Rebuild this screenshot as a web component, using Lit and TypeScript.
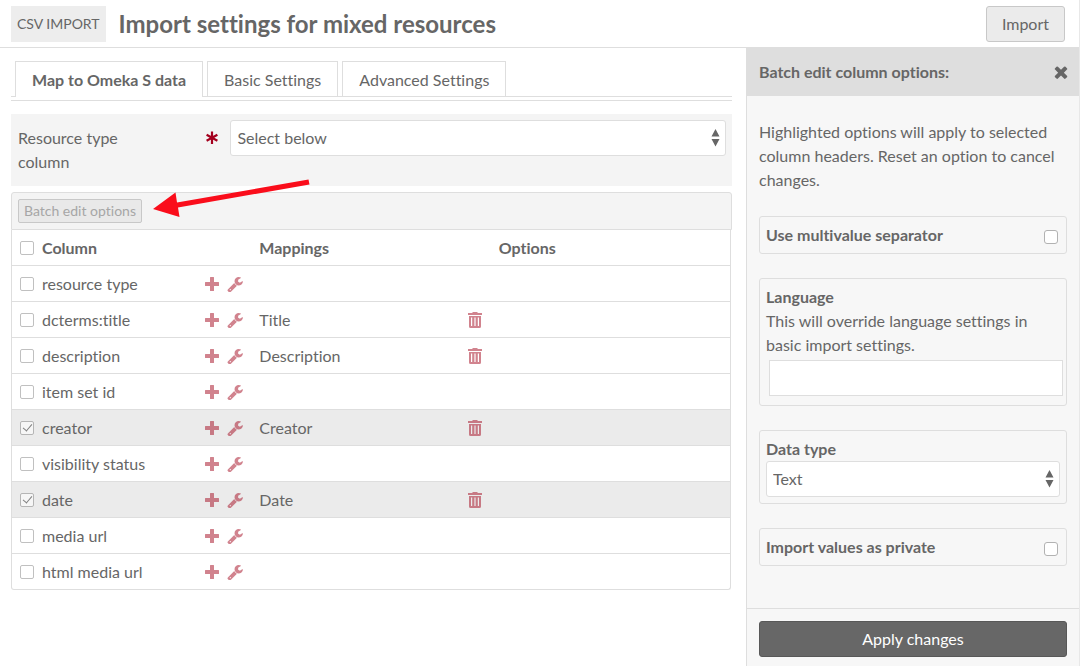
import { LitElement, html, css, svg } from "lit";
import { customElement, property } from "lit/decorators.js";
import { classMap } from "lit/directives/class-map.js";

interface Row {
  name: string;
  mapping?: string;
  selected?: boolean;
}

const ROWS: Row[] = [
  { name: "resource type" },
  { name: "dcterms:title", mapping: "Title" },
  { name: "description", mapping: "Description" },
  { name: "item set id" },
  { name: "creator", mapping: "Creator", selected: true },
  { name: "visibility status" },
  { name: "date", mapping: "Date", selected: true },
  { name: "media url" },
  { name: "html media url" },
];

const ICONS = {
  plus: svg`<path d="M6.500 1h3q.5 0 .5.5V6h4.500q.5 0 .5.5v3q0 .5-.5.5H10v4.500q0 .5-.5.5h-3q-.5 0-.5-.5V10H1.500q-.5 0-.5-.5v-3q0-.5.5-.5H6V1.500q0-.5.5-.5z"/>`,
  wrench: svg`<path transform="translate(-.3 -.2) scale(.0094)" d="M448 1472q0-26-19-45t-45-19-45 19-19 45 19 45 45 19 45-19 19-45zm644-420l-682 682q-37 37-90 37-52 0-91-37l-106-108q-38-36-38-90 0-53 38-91l681-681q39 98 114.500 173.500t173.500 114.500zm634-435q0 39-23 106-47 134-164.500 217.500t-258.500 83.500q-185 0-316.500-131.500t-131.500-316.500 131.500-316.500 316.500-131.500q58 0 121.500 16.500t107.500 46.500q16 11 16 28t-16 28l-293 169v224l193 107q5-3 79-48.500t135.500-81 70.500-35.500q15 0 23.500 10t8.500 25z"/>`,
  trash: svg`<path fill-rule="evenodd" d="M5.500 0h5v1H15v2H1V1h4.500zM2 4h12v10.500q0 1.500-1.500 1.500h-9Q2 16 2 14.500zM4 5.500v8.500h1.200V5.500zM7.400 5.500v8.500h1.200V5.500zM10.800 5.500v8.500H12V5.500z"/>`,
  close: svg`<path transform="translate(-1.400 -1.400) scale(.0105)" d="M1490 1322q0 40-28 68l-136 136q-28 28-68 28t-68-28l-294-294-294 294q-28 28-68 28t-68-28l-136-136q-28-28-28-68t28-68l294-294-294-294q-28-28-28-68t28-68l136-136q28-28 68-28t68 28l294 294 294-294q28-28 68-28t68 28l136 136q28 28 28 68t-28 68l-294 294 294 294q28 28 28 68z"/>`,
  asterisk: svg`<path fill="none" stroke="currentColor" stroke-width="2.200" d="M8 1.500v12.500M2.600 4.800l10.800 6M13.400 4.800L2.600 10.800"/>`,
};

const icon = (name: keyof typeof ICONS) =>
  html`<svg class="icon" width="16" height="16" viewBox="0 0 16 16" fill="currentColor" aria-hidden="true">${ICONS[name]}</svg>`;

const shared = css`
  :host {
    display: block;
    color: #666;
    font: 16px/24px Lato, sans-serif;
    font-variant-ligatures: none;
  }
  *,
  *::before,
  *::after {
    box-sizing: border-box;
  }
  button,
  input,
  select {
    font: inherit;
    color: inherit;
    margin: 0;
  }
  .icon {
    display: block;
    flex: none;
  }
  .icon-button {
    display: block;
    padding: 0;
    border: 0;
    background: none;
    cursor: pointer;
  }
  .check {
    appearance: none;
    display: grid;
    place-items: center;
    flex: none;
    width: 14px;
    height: 14px;
    border: 1px solid #b2b2b2;
    border-radius: 3px;
    background: #fff;
  }
  .select {
    display: grid;
    align-items: center;
  }
  .select select {
    grid-area: 1 / 1;
    appearance: none;
    width: 100%;
    height: 36px;
    padding: 0 24px 0 6px;
    border: 1px solid #dedede;
    border-radius: 3px;
    background: #fff;
  }
  .select .arrows {
    grid-area: 1 / 1;
    justify-self: end;
    margin-right: 6px;
    pointer-events: none;
  }
`;

const arrows = html`<svg class="arrows" width="9" height="18" viewBox="0 0 9 18" fill="#666" aria-hidden="true">
  <path d="M4.500 0L8.500 7.500h-8zM4.500 17.500L8.500 10h-8z" />
</svg>`;

@customElement("mapping-table")
export class MappingTable extends LitElement {
  @property({ attribute: false }) rows: Row[] = [];

  static styles = [
    shared,
    css`
      .toolbar {
        position: relative;
        padding: 6px;
        border: 1px solid #dedede;
        border-radius: 3px 3px 0 0;
        background: #f4f4f4;
      }
      .batch {
        display: block;
        height: 24px;
        padding: 0 5px;
        border: 1px solid #c8c8c8;
        border-radius: 2px;
        background: #e9e9e9;
        color: #a6a6a6;
        font-size: 14px;
        line-height: 22px;
      }
      .pointer {
        position: absolute;
        left: 139px;
        top: -15px;
        pointer-events: none;
      }
      .frame {
        margin-right: 1px;
        border: solid #dedede;
        border-width: 0 1px 1px;
        border-radius: 0 0 3px 3px;
      }
      .table {
        width: 100%;
        table-layout: fixed;
        border-collapse: separate;
        border-spacing: 0;
      }
      .table th,
      .table td {
        height: 36px;
        padding: 0 8px;
        border-bottom: 1px solid #dedede;
        text-align: left;
      }
      .table tbody tr:last-child td {
        height: 35px;
        border-bottom: 0;
      }
      .selected {
        background: #ebebeb;
      }
      .cell {
        display: flex;
        align-items: center;
        gap: 7px;
      }
      .name {
        display: flex;
        align-items: center;
        gap: 8px;
        flex: 1;
      }
      .mapping {
        flex: 1;
      }
      .icon-button {
        color: #a4091f;
        opacity: 0.5;
      }
      .check {
        border: 1px solid #c0c0c0;
        border-radius: 2px;
      }
      .check:checked {
        background: #f6f6f6;
        border-color: #b5b5b5;
      }
      .check:checked::after {
        content: "";
        width: 5px;
        height: 9px;
        margin-bottom: 2px;
        border: solid #808080;
        border-width: 0 1px 1px 0;
        transform: rotate(40deg);
      }
    `,
  ];

  render() {
    return html`
      <div class="toolbar">
        <button class="batch" disabled>Batch edit options</button>
        <svg class="pointer" width="160" height="44" viewBox="151 178 160 44" aria-hidden="true">
          <path d="M153 209L175.500 192.500L177 202.500L308.500 179.500L309.500 184.500L178 207.500L179.500 217Z" fill="#fa0d1b" />
        </svg>
      </div>
      <div class="frame">
        <table class="table">
          <thead>
            <tr>
              <th scope="col">
                <label class="name"><input class="check" type="checkbox" />Column</label>
              </th>
              <th scope="col">Mappings</th>
              <th scope="col">Options</th>
            </tr>
          </thead>
          <tbody>
            ${this.rows.map(
              (row) => html`
                <tr class=${classMap({ selected: !!row.selected })}>
                  <td>
                    <div class="cell">
                      <label class="name"
                        ><input class="check" type="checkbox" .checked=${!!row.selected} />${row.name}</label
                      >
                      <button class="icon-button" aria-label="Add mapping">${icon("plus")}</button>
                      <button class="icon-button" aria-label="Configure column">${icon("wrench")}</button>
                    </div>
                  </td>
                  <td>
                    ${row.mapping
                      ? html`<div class="cell">
                          <span class="mapping">${row.mapping}</span>
                          <button class="icon-button" aria-label="Remove mapping">${icon("trash")}</button>
                        </div>`
                      : ""}
                  </td>
                  <td></td>
                </tr>
              `,
            )}
          </tbody>
        </table>
      </div>
    `;
  }
}

@customElement("batch-sidebar")
export class BatchSidebar extends LitElement {
  static styles = [
    shared,
    css`
      :host {
        display: flex;
        flex-direction: column;
        border-left: 1px solid #dedede;
        background: #f7f7f7;
      }
      .head {
        display: flex;
        align-items: center;
        justify-content: space-between;
        padding: 12px 10px 12px 12px;
        background: #dedede;
      }
      .title {
        margin: 0;
        font-size: 16px;
        line-height: 24px;
      }
      .body {
        display: flex;
        flex-direction: column;
        flex: 1;
        gap: 24px;
        padding: 24px 12px;
      }
      .body p {
        margin: 0;
      }
      .box {
        padding: 6px;
        border: 1px solid #dedede;
        border-radius: 3px;
      }
      .label {
        display: block;
        font-weight: bold;
      }
      .line {
        display: flex;
        align-items: flex-end;
        justify-content: space-between;
      }
      .line .check {
        margin: 0 2px 3px;
      }
      .text {
        display: block;
        width: 100%;
        height: 36px;
        margin: 3px;
        padding: 0 6px;
        border: 1px solid #dedede;
        background: #fff;
      }
      .foot {
        padding: 12px 12px 9px;
        border-top: 1px solid #dedede;
      }
      .apply {
        display: block;
        width: 100%;
        height: 36px;
        border: 1px solid #585858;
        border-radius: 3px;
        background: #676767;
        color: #fff;
      }
    `,
  ];

  render() {
    return html`
      <div class="head">
        <h2 class="title">Batch edit column options:</h2>
        <button class="icon-button" aria-label="Close">${icon("close")}</button>
      </div>
      <div class="body">
        <p>Highlighted options will apply to selected column headers. Reset an option to cancel changes.</p>
        <div class="box">
          <label class="label line">Use multivalue separator<input class="check" type="checkbox" /></label>
        </div>
        <div class="box">
          <label class="label" for="language">Language</label>
          <p id="language-help">This will override language settings in basic import settings.</p>
          <input class="text" id="language" type="text" aria-describedby="language-help" />
        </div>
        <div class="box">
          <label class="label" for="data-type">Data type</label>
          <div class="select">
            <select id="data-type">
              <option>Text</option>
            </select>
            ${arrows}
          </div>
        </div>
        <div class="box">
          <label class="label line">Import values as private<input class="check" type="checkbox" /></label>
        </div>
      </div>
      <div class="foot"><button class="apply">Apply changes</button></div>
    `;
  }
}

@customElement("app-root")
export class AppRoot extends LitElement {
  static styles = [
    shared,
    css`
      :host {
        display: flex;
        flex-direction: column;
        min-height: 100vh;
        margin-right: 1px;
        border-right: 1px solid #e8e8e8;
        background: #fff;
      }
      .header {
        display: flex;
        align-items: center;
        padding: 6px 14px 5px 11px;
        border-bottom: 1px solid #dedede;
      }
      .badge {
        padding: 6px;
        margin-right: 13px;
        background: #ededed;
        font-size: 14px;
        text-transform: uppercase;
      }
      .heading {
        flex: 1;
        margin: 0;
        font-size: 24px;
        line-height: 36px;
      }
      .import {
        height: 36px;
        padding: 0 15px;
        border: 1px solid #c8c8c8;
        border-radius: 3px;
        background: #ebebeb;
      }
      .columns {
        flex: 1;
        display: grid;
        grid-template-columns: minmax(0, 1fr) 333px;
      }
      .main {
        padding: 13px 14px 24px 11px;
      }
      .tabs {
        padding-bottom: 3px;
        border-bottom: 1px solid #dedede;
      }
      .tablist {
        display: flex;
        gap: 4px;
        padding-left: 4px;
        border-bottom: 1px solid #dedede;
      }
      .tab {
        padding: 6px 16px 4px;
        border: 1px solid #dedede;
        border-bottom: 0;
        color: inherit;
        text-decoration: none;
      }
      .active {
        margin-bottom: -1px;
        padding-bottom: 5px;
        background: #fff;
        font-weight: bold;
      }
      .field {
        display: grid;
        grid-template-columns: 30% 1fr;
        align-items: start;
        margin: 13px 0 6px;
        padding: 6px 6px 6px 7px;
        background: #f4f4f4;
      }
      .field-label {
        display: flex;
        justify-content: space-between;
        padding: 6px 10px 6px 0;
      }
      .field-label .name {
        width: 120px;
      }
      .required {
        color: #a4001e;
        padding-top: 4px;
      }
    `,
  ];

  render() {
    return html`
      <header class="header">
        <span class="badge">CSV Import</span>
        <h1 class="heading">Import settings for mixed resources</h1>
        <button class="import">Import</button>
      </header>
      <div class="columns">
        <main class="main">
          <nav class="tabs">
            <div class="tablist">
              <a class="tab active" href="#map">Map to Omeka S data</a>
              <a class="tab" href="#basic">Basic Settings</a>
              <a class="tab" href="#advanced">Advanced Settings</a>
            </div>
          </nav>
          <div class="field">
            <label class="field-label" for="resource-type">
              <span class="name">Resource type column</span>
              <span class="required">${icon("asterisk")}</span>
            </label>
            <div class="select">
              <select id="resource-type">
                <option>Select below</option>
              </select>
              ${arrows}
            </div>
          </div>
          <mapping-table .rows=${ROWS}></mapping-table>
        </main>
        <batch-sidebar></batch-sidebar>
      </div>
    `;
  }
}
